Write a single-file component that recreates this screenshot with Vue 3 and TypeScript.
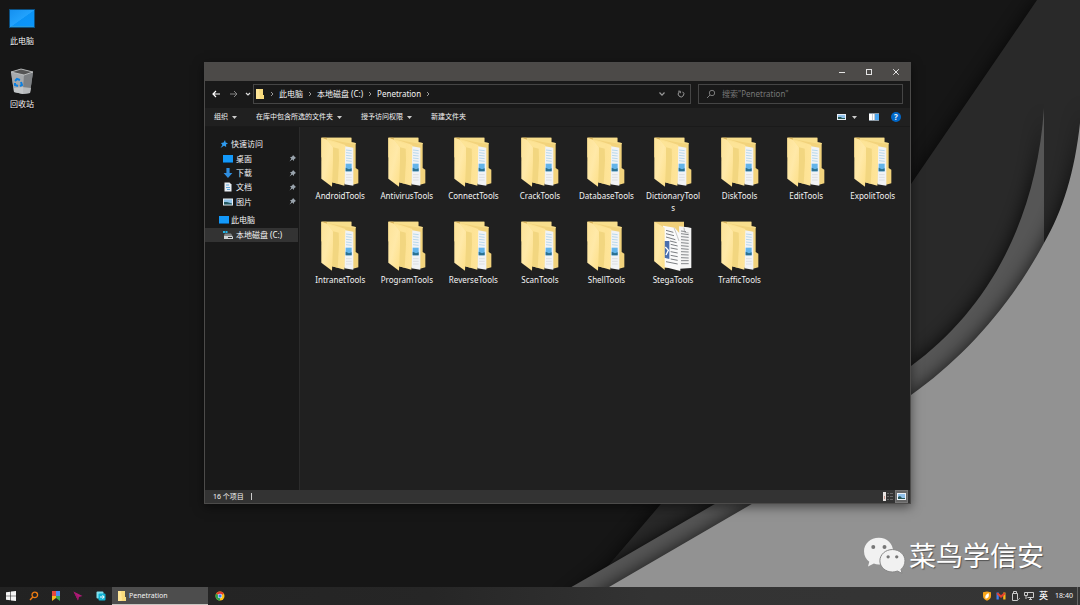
<script setup lang="ts">
import { ref } from 'vue'

interface PlaceItem {
  name: string
  icon: string
  root?: boolean
  pinned?: boolean
  selected?: boolean
}

const desktopIcons = [
  { name: '此电脑', icon: 'monitor' },
  { name: '回收站', icon: 'bin' },
]

const crumbs = ['此电脑', '本地磁盘 (C:)', 'Penetration']

const commands = [
  { name: '组织', menu: true },
  { name: '在库中包含所选的文件夹', menu: true },
  { name: '授予访问权限', menu: true },
  { name: '新建文件夹', menu: false },
]

const placeGroups: PlaceItem[][] = [
  [
    { name: '快速访问', icon: 'star', root: true },
    { name: '桌面', icon: 'screen', pinned: true },
    { name: '下载', icon: 'download', pinned: true },
    { name: '文档', icon: 'document', pinned: true },
    { name: '图片', icon: 'picture', pinned: true },
  ],
  [
    { name: '此电脑', icon: 'screen', root: true },
    { name: '本地磁盘 (C:)', icon: 'drive', selected: true },
  ],
]

const folders = [
  'AndroidTools', 'AntivirusTools', 'ConnectTools', 'CrackTools', 'DatabaseTools',
  'DictionaryTools', 'DiskTools', 'EditTools', 'ExpolitTools', 'IntranetTools',
  'ProgramTools', 'ReverseTools', 'ScanTools', 'ShellTools', 'StegaTools', 'TrafficTools',
]

const query = ref('')
</script>

<template>
  <main class="desktop">
    <svg class="wallpaper" viewBox="0 0 1080 605" preserveAspectRatio="none" aria-hidden="true">
      <defs>
        <filter id="soft" x="-20%" y="-20%" width="140%" height="140%">
          <feGaussianBlur stdDeviation="9" />
        </filter>
        <linearGradient id="leaf" x1="0" y1="0" x2="1" y2="1">
          <stop offset="0" stop-color="#fde398" />
          <stop offset="0.5" stop-color="#ffe9a8" />
          <stop offset="1" stop-color="#fddf88" />
        </linearGradient>
        <linearGradient id="panel" x1="0" y1="0" x2="1" y2="0">
          <stop offset="0" stop-color="#f9de8c" />
          <stop offset="1" stop-color="#ffe59a" />
        </linearGradient>
        <linearGradient id="glass" x1="0" y1="0" x2="1" y2="1">
          <stop offset="0" stop-color="#1590f0" />
          <stop offset="0.5" stop-color="#22a2fc" />
          <stop offset="0.52" stop-color="#0c93f5" />
          <stop offset="1" stop-color="#0a96fb" />
        </linearGradient>
        <path id="layer-dark" d="M1037 0L911 184Q770 385 660 505L608 566L560 605H1080V0Z" />
        <path id="layer-mid" d="M1044 108C1036 225 985 312 911 366C850 410 780 470 713 505L608 566L540 605H1044Z" />
        <path id="layer-light" d="M1082 100C1078 160 1066 205 1044 243C1012 303 965 357 911 395C860 430 810 472 750 505L609 587L580 605H1082Z" />
        <clipPath id="clip-dark"><use href="#layer-dark" /></clipPath>
      </defs>
      <rect width="1080" height="605" fill="#161616" />
      <use href="#layer-dark" fill="#000" opacity="0.7" filter="url(#soft)" />
      <use href="#layer-dark" fill="#292929" />
      <g clip-path="url(#clip-dark)">
        <use href="#layer-mid" fill="#000" opacity="0.85" filter="url(#soft)" />
        <rect x="1044" width="36" height="605" fill="#292929" />
      </g>
      <use href="#layer-mid" fill="#565656" />
      <use href="#layer-light" fill="#000" opacity="0.75" filter="url(#soft)" />
      <use href="#layer-light" fill="#929292" />
    </svg>

    <ul class="shortcuts">
      <li v-for="item in desktopIcons" :key="item.name">
        <button type="button" class="shortcut">
          <svg v-if="item.icon === 'monitor'" viewBox="0 0 26 26" width="26" height="26" aria-hidden="true">
            <rect x="0" y="4" width="26" height="19" fill="#0b4f80" />
            <rect x="1" y="5" width="24" height="17" fill="url(#glass)" />
            <rect x="2" y="21" width="22" height="1" fill="#2a9ad8" />
          </svg>
          <svg v-else viewBox="0 0 26 26" width="26" height="26" aria-hidden="true">
            <path d="M2 4L12 1L24 4L21 25L14 26L5 24Z" fill="#8e9194" />
            <path d="M2 4L15 7L14 26L5 24Z" fill="#a6a9ac" />
            <path d="M15 7L24 4L21 25L14 26Z" fill="#7d8083" />
            <path d="M2 4L12 1L24 4L15 7Z" fill="#555" stroke="#c9cbcc" stroke-width="0.8" />
            <path d="M5 20L13 19L22 20L21 25L14 26L5 24Z" fill="#cfd1d3" opacity="0.7" />
            <g fill="none" stroke="#0b7fe0" stroke-width="2">
              <path d="M6 13L8 11L11 12" /><path d="M12 14L13 17L11 18" /><path d="M9 18L6 17L6 15" />
            </g>
          </svg>
          <span>{{ item.name }}</span>
        </button>
      </li>
    </ul>

    <section class="window" aria-label="Penetration">
      <header class="titlebar">
        <button type="button" aria-label="最小化">
          <svg viewBox="0 0 8 8" width="8" height="8"><path d="M1 4.5H7" stroke="#e4e4e4" /></svg>
        </button>
        <button type="button" aria-label="最大化">
          <svg viewBox="0 0 8 8" width="8" height="8"><rect x="1.5" y="1.5" width="5" height="5" fill="none" stroke="#e4e4e4" /></svg>
        </button>
        <button type="button" aria-label="关闭">
          <svg viewBox="0 0 8 8" width="8" height="8"><path d="M1.2 1.2L6.8 6.8M6.8 1.2L1.2 6.8" stroke="#e4e4e4" /></svg>
        </button>
      </header>

      <div class="navbar">
        <div class="history">
          <button type="button" aria-label="后退">
            <svg viewBox="0 0 8 8" width="8" height="8"><path d="M8 4H1M4 1L1 4L4 7" fill="none" stroke="#fff" stroke-width="1.2" /></svg>
          </button>
          <button type="button" aria-label="前进">
            <svg viewBox="0 0 8 8" width="8" height="8"><path d="M0 4H7M4 1L7 4L4 7" fill="none" stroke="#858585" /></svg>
          </button>
          <button type="button" class="recent" aria-label="最近位置">
            <svg viewBox="0 0 6 4" width="6" height="4"><path d="M1 1L3 3L5 1" fill="none" stroke="#ddd" stroke-width="1.2" /></svg>
          </button>
        </div>
        <nav class="address" aria-label="地址">
          <svg viewBox="0 0 9 10" width="9" height="10" aria-hidden="true">
            <path d="M0 0H7V6H8V10H0Z" fill="#f7da7d" /><path d="M0 0H3L4 9L3 10H0Z" fill="#ffe698" />
          </svg>
          <svg class="chevron" viewBox="0 0 4 6" width="4" height="6" aria-hidden="true"><path d="M1 1L3 3L1 5" fill="none" stroke="#999" /></svg>
          <template v-for="crumb in crumbs" :key="crumb">
            <a href="#">{{ crumb }}</a>
            <svg class="chevron" viewBox="0 0 4 6" width="4" height="6" aria-hidden="true"><path d="M1 1L3 3L1 5" fill="none" stroke="#999" /></svg>
          </template>
          <button type="button" class="expand" aria-label="展开">
            <svg viewBox="0 0 8 6" width="8" height="6"><path d="M1.5 1.5L4 4.2L6.5 1.5" fill="none" stroke="#999" stroke-width="1.2" /></svg>
          </button>
          <button type="button" class="refresh" aria-label="刷新">
            <svg viewBox="0 0 8 8" width="8" height="8"><path d="M5.6 1.8A2.8 2.8 0 1 1 2.2 2M1.2 1.2H3.3V3.2" fill="none" stroke="#999" /></svg>
          </button>
        </nav>
        <label class="search">
          <svg viewBox="0 0 10 10" width="10" height="10" aria-hidden="true"><circle cx="6" cy="4" r="2.7" fill="none" stroke="#7a7a7a" /><path d="M4 6L1 9" stroke="#7a7a7a" /></svg>
          <input v-model="query" type="text" aria-label="搜索" placeholder="搜索&quot;Penetration&quot;" />
        </label>
      </div>

      <div class="commands">
        <button v-for="command in commands" :key="command.name" type="button">
          {{ command.name }}
          <svg v-if="command.menu" viewBox="0 0 5 3" width="5" height="3" aria-hidden="true"><path d="M0 0H5L2.5 3Z" fill="#ccc" /></svg>
        </button>
        <div class="view-tools">
          <button type="button" aria-label="更改视图">
            <svg viewBox="0 0 9 8" width="9" height="8"><path d="M0 1H9V7H0Z" fill="#e8eef4" /><path d="M1 2H8V6H1Z" fill="#8fc0ea" /><path d="M1 6V4L4 4L5 5H8V6Z" fill="#285b58" /></svg>
          </button>
          <button type="button" aria-label="更多选项">
            <svg viewBox="0 0 5 3" width="5" height="3"><path d="M0 0H5L2.5 3Z" fill="#ccc" /></svg>
          </button>
          <button type="button" class="preview" aria-label="预览窗格">
            <svg viewBox="0 0 10 8" width="10" height="8"><path d="M0 0H10V8H0Z" fill="#8d9aa5" /><path d="M0 1H3V7H0Z" fill="#fff" /><path d="M3.5 1H5.5V7H3.5Z" fill="#fff" /><path d="M6 1H10V7H6Z" fill="#4aa5ee" /></svg>
          </button>
          <button type="button" class="help" aria-label="帮助">?</button>
        </div>
      </div>

      <div class="body">
        <nav class="places" aria-label="导航窗格">
          <ul v-for="(group, index) in placeGroups" :key="index" :class="['place-group', { short: index === 1 }]">
            <li v-for="place in group" :key="place.name" :class="{ selected: place.selected }">
              <a href="#" :class="{ root: place.root }">
                <svg viewBox="0 0 10 10" width="10" height="10" aria-hidden="true">
                  <path v-if="place.icon === 'star'" d="M6 1L6.6 3.6L9 4.2L7 5.6L7.2 8L5 6.8L1.5 9L3.4 6L2 4L4.6 3.6Z" fill="#2f9cf0" />
                  <g v-else-if="place.icon === 'screen'"><rect y="1" width="10" height="8" fill="#0b5c9c" /><rect y="1" width="10" height="7" fill="#1399fa" /></g>
                  <path v-else-if="place.icon === 'download'" d="M3.4 0H6.6V5H9.4L5 10L0.6 5H3.4Z" fill="#2f8ee0" />
                  <g v-else-if="place.icon === 'document'"><path d="M1.5 0.5H6.5L8.5 2.5V9.5H1.5Z" fill="#e9eef3" /><path d="M3 3H6M3 5.5H7M4 7.5H7" stroke="#5fa8dd" /></g>
                  <g v-else-if="place.icon === 'picture'"><rect y="1.5" width="10" height="7" fill="#e8eef2" /><rect x="1" y="2.5" width="8" height="5" fill="#8fc3ea" /><path d="M1 7.5V5L4 5L9 6.5V7.5Z" fill="#24585f" /></g>
                  <g v-else><path d="M1 5.5H9L10 7V9H1Z" fill="#d0d3d5" /><path d="M5 7.5H9" stroke="#333" /><path d="M0 1H2V3H0ZM2.5 1H4.5V3H2.5Z" fill="#23b6e8" /><path d="M1 5L2 3.5H8L9 5Z" fill="#7e8385" /></g>
                </svg>
                <span>{{ place.name }}</span>
                <svg v-if="place.pinned" class="pin" viewBox="0 0 7 7" width="7" height="7" aria-hidden="true">
                  <path d="M4 0L7 3L6 3.4L5 4.6V6L3.3 4.6L0.5 6.5L2.3 3.7L1 2H2.4L3.6 1Z" fill="#9aa4ad" />
                </svg>
              </a>
            </li>
          </ul>
        </nav>

        <ul class="files">
          <li v-for="folder in folders" :key="folder">
            <button type="button" class="file">
              <svg viewBox="0 0 114 150" width="38" height="50" aria-hidden="true">
                <template v-if="folder === 'StegaTools'">
                  <path d="M1 2H90V20H104V140H30L1 120Z" fill="#f0d07a" />
                  <path d="M75 16L101 19L112 21V141L78 143Z" fill="#f4f4f4" />
                  <path d="M81 30L96 32M81 38L104 41M81 47L104 49M81 56L104 58M81 65L104 67M81 74L104 76M81 83L104 85M81 92L104 93M81 101L104 102M81 110L104 111M81 119L104 119M81 128L104 128" stroke="#85888b" stroke-width="3" />
                  <path d="M90 20L92 34L104 36" fill="none" stroke="#999" stroke-width="2" />
                  <path d="M27 14L62 20L79 40V150L29 137Z" fill="#fafafa" />
                  <path d="M60 20L70 46L75 60" fill="none" stroke="#aaa" stroke-width="2" />
                  <path d="M36 28L58 34M36 38L60 44M36 48L64 56M48 60L68 65M50 70L71 75M50 81L71 85M50 92L71 96M50 103L71 107M50 114L71 118M36 122L71 129" stroke="#7b7e82" stroke-width="3" />
                  <path d="M31 60H46V114L31 110Z" fill="#4a6fae" />
                  <path d="M34 78L43 88L36 102" fill="none" stroke="#fff" stroke-width="4" />
                  <path d="M1 2L32 20V147L1 121Z" fill="url(#leaf)" />
                </template>
                <template v-else>
                  <path d="M1 2H91V16L104 18V93L112 98V139L96 143L70 139L1 60Z" fill="#f2d37c" />
                  <path d="M1 2H91V16L104 18V22L60 14Z" fill="#f8de8c" />
                  <path d="M1 2H16L20 10L12 7Z" fill="#d9b35a" />
                  <path d="M72 28L97 32V146L70 142Z" fill="#f1f3f5" />
                  <path d="M75 39L92 41M75 47L92 49M75 55L92 57M75 63L92 65M75 71L92 73" stroke="#b8d8ec" stroke-width="3" />
                  <path d="M74 80H92V103H74Z" fill="#63b4ea" />
                  <path d="M74 92L84 97L92 94V103H74Z" fill="#2b7090" />
                  <path d="M75 113H92M75 121H92M75 129H92" stroke="#dcdfe2" stroke-width="3" />
                  <path d="M18 5L73 24L70 146L33 136Z" fill="url(#panel)" />
                  <path d="M34 24L53 31L54 70L50 140L33 136Z" fill="#f2d680" />
                  <path d="M1 2L18 8L36 31V72L33 149L1 125Z" fill="url(#leaf)" />
                  <path d="M18 8L36 31L54 35V22Z" fill="#fde497" />
                </template>
              </svg>
              <span>{{ folder }}</span>
            </button>
          </li>
        </ul>
      </div>

      <footer class="statusbar">
        <span class="count">16 个项目</span>
        <div class="modes">
          <button type="button" aria-label="详细信息">
            <svg viewBox="0 0 10 9" width="10" height="9"><path d="M0 0H3V9H0Z" fill="#e8e4e2" /><path d="M1 4H2V7H1Z" fill="#c79285" /><path d="M4 1.5H6M7 1.5H10M4 4.5H6M7 4.5H10M4 7.5H6M7 7.5H10" stroke="#666" /></svg>
          </button>
          <button type="button" class="active" aria-label="大图标">
            <svg viewBox="0 0 9 7" width="9" height="7"><path d="M0 0H9V7H0Z" fill="#edf2f7" /><path d="M1 1H8V5H1Z" fill="#8fc0ea" /><path d="M1 6V4L3 3L5 5H8V6Z" fill="#28575a" /></svg>
          </button>
        </div>
      </footer>
    </section>

    <div class="watermark">
      <svg viewBox="36 168 130 112" width="43" height="37" aria-hidden="true">
        <path d="M84 170C58 170 39 188 39 211C39 224 45 236 55 243L51 257L69 248C75 251 80 252 88 251C111 249 127 232 127 211C127 188 109 170 84 170Z" fill="#f1f1f1" />
        <path d="M125 206C104 206 87 221 87 240C87 259 104 274 125 274C130 274 135 273 140 271L154 278L151 266C158 260 163 251 163 240C163 221 146 206 125 206Z" fill="#f1f1f1" stroke="#858585" stroke-width="3" />
        <circle cx="67" cy="198" r="6" fill="#777" /><circle cx="101" cy="198" r="6" fill="#777" />
        <circle cx="112" cy="228" r="5" fill="#777" /><circle cx="138" cy="228" r="5" fill="#777" />
      </svg>
      <span>菜鸟学信安</span>
    </div>

    <footer class="taskbar">
      <div class="pinned">
        <button type="button" aria-label="开始">
          <svg viewBox="0 0 10 10" width="10" height="10"><path d="M0 1.3L4.4 0.7V4.7H0ZM5 0.6L10 0V4.7H5ZM0 5.3H4.4V9.3L0 8.7ZM5 5.3H10V10L5 9.4Z" fill="#f5f5f5" /></svg>
        </button>
        <button type="button" aria-label="搜索">
          <svg viewBox="0 0 10 10" width="10" height="10"><circle cx="5.8" cy="3.9" r="2.8" fill="none" stroke="#f07d13" stroke-width="1.3" /><path d="M3.8 6L1 9" stroke="#f07d13" stroke-width="1.4" /></svg>
        </button>
        <button type="button" aria-label="收藏">
          <svg viewBox="0 0 10 10" width="10" height="10"><path d="M1 0H5V5H1Z" fill="#e5483d" /><path d="M5 0H9V5H5Z" fill="#4a8cf0" /><path d="M1 5H5V7L1 10Z" fill="#f4b91d" /><path d="M5 5H9V10L5 7Z" fill="#3aa757" /></svg>
        </button>
        <button type="button" aria-label="指针">
          <svg viewBox="0 0 10 10" width="10" height="10"><path d="M0.5 0.5L9.5 5L5.8 6L5 9.5Z" fill="#b11b78" /><path d="M0.5 0.5L5.8 6L5 9.5Z" fill="#a0186c" /></svg>
        </button>
        <button type="button" aria-label="同步">
          <svg viewBox="0 0 10 10" width="10" height="10"><rect x="0.5" y="0.5" width="7" height="7" rx="1" fill="#7fe0ee" /><rect x="2.5" y="2.5" width="7" height="7" rx="1" fill="#10b3d4" /><path d="M4 6H8M6.5 4.2L8.2 6L6.5 7.8" fill="none" stroke="#fff" /></svg>
        </button>
      </div>
      <button type="button" class="task">
        <svg viewBox="0 0 9 10" width="9" height="10" aria-hidden="true"><path d="M0 0H7V6H8V10H0Z" fill="#f7da7d" /><path d="M0 0H3L4 9L3 10H0Z" fill="#ffe698" /></svg>
        <span>Penetration</span>
      </button>
      <button type="button" class="chrome" aria-label="Chrome">
        <svg viewBox="0 0 10 10" width="10" height="10"><circle cx="5" cy="5" r="4.5" fill="#fbc116" /><path d="M5 5L1.1 2.8A4.5 4.5 0 0 1 8.9 2.8Z" fill="#e33b2e" /><path d="M5 5L1.1 2.8A4.5 4.5 0 0 0 5 9.5Z" fill="#2ca14c" /><circle cx="5" cy="5" r="2.2" fill="#fff" /><circle cx="5" cy="5" r="1.7" fill="#3b7ded" /></svg>
      </button>
      <div class="tray">
        <svg viewBox="0 0 10 10" width="10" height="10" role="img" aria-label="安全"><path d="M5 0.5L9 1.3V5C9 7.5 7 9 5 9.8C3 9 1 7.5 1 5V1.3Z" fill="#f8a51b" /><path d="M6.5 2C3.5 3.5 3 5 3.4 7.5C6.5 7.5 7.5 5 6.5 2Z" fill="#fff" /></svg>
        <svg viewBox="0 0 10 10" width="10" height="10" role="img" aria-label="邮件"><path d="M0.5 1.5V8.5H2.8V1.5Z" fill="#3f7fee" /><path d="M7.2 1.5V8.5H9.5V1.5Z" fill="#f9b818" /><path d="M1.2 2.2L5 5.6L8.8 2.2" fill="none" stroke="#e3402f" stroke-width="2" /></svg>
        <svg viewBox="0 0 10 10" width="10" height="10" role="img" aria-label="USB"><path d="M3.5 0.5H6.5V2.5H3.5ZM2.5 2.5H7.5V9.5H2.5Z" fill="none" stroke="#ccc" /><path d="M7 8L8 9L10 7" fill="none" stroke="#999" /></svg>
        <svg viewBox="0 0 10 10" width="10" height="10" role="img" aria-label="网络"><path d="M2.5 1.5H9.5V6.5H3.5M5 8.5H8M6.5 6.5V8.5" fill="none" stroke="#ccc" /><path d="M0.5 1.5H3.5V4.5H0.5ZM2 4.5V8" fill="none" stroke="#ccc" /></svg>
        <span class="ime">英</span>
        <time>18:40</time>
      </div>
    </footer>
  </main>
</template>

<style>
body {
  margin: 0;
  background: #161616;
}
</style>

<style scoped>
.desktop {
  position: relative;
  display: flex;
  flex-direction: column;
  justify-content: space-between;
  height: 100vh;
  overflow: hidden;
  color: #f4f4f4;
  font: 8px/12px "Noto Sans", "Noto Sans CJK SC", sans-serif;
}

.wallpaper {
  position: absolute;
  inset: 0;
  width: 100%;
  height: 100%;
}

ul {
  margin: 0;
  padding: 0;
  list-style: none;
}

button {
  display: flex;
  align-items: center;
  justify-content: center;
  margin: 0;
  padding: 0;
  border: 0;
  background: none;
  color: inherit;
  font: inherit;
}

a {
  color: inherit;
  text-decoration: none;
}

svg {
  flex: none;
}

.shortcuts {
  position: relative;
  width: 44px;
  padding-top: 5px;
}

.shortcut {
  flex-direction: column;
  justify-content: flex-start;
  gap: 4px;
  width: 100%;
  height: 63px;
  text-shadow: 0 1px 1px #000;
}

.window {
  position: absolute;
  top: 62px;
  right: 169px;
  bottom: 101px;
  left: 204px;
  box-sizing: border-box;
  display: flex;
  flex-direction: column;
  border: 1px solid #4c4b4a;
  background: #202020;
  box-shadow: 0 3px 10px rgba(0, 0, 0, 0.5);
}

.titlebar {
  display: flex;
  justify-content: flex-end;
  height: 18px;
  padding-right: 1px;
  background: #4c4a48;
}

.titlebar button {
  width: 27px;
}

.navbar {
  box-sizing: border-box;
  display: flex;
  align-items: center;
  height: 27px;
  padding: 0 7px 1px 2px;
  background: #191919;
}

.history {
  display: flex;
}

.history button {
  width: 18px;
  height: 20px;
}

.history .recent {
  width: 10px;
}

.address,
.search {
  box-sizing: border-box;
  display: flex;
  align-items: center;
  height: 20px;
  border: 1px solid #454545;
}

.address {
  flex: 1;
  padding-left: 2px;
}

.chevron {
  margin: 0 5px;
}

.expand {
  width: 18px;
  height: 18px;
  margin-left: auto;
}

.refresh {
  width: 19px;
  height: 18px;
}

.search {
  gap: 6px;
  width: 205px;
  margin-left: 7px;
  padding-left: 7px;
}

.search input {
  flex: 1;
  min-width: 0;
  padding: 0;
  border: 0;
  outline: 0;
  background: none;
  color: #ddd;
  font: inherit;
}

.search input::placeholder {
  color: #777;
  opacity: 1;
}

.commands {
  display: flex;
  align-items: center;
  gap: 19px;
  height: 18px;
  padding: 0 9px;
  border-bottom: 1px solid #1a1a1a;
  font-size: 7px;
}

.commands button {
  gap: 4px;
}

.view-tools {
  display: flex;
  align-items: center;
  gap: 6px;
  margin-left: auto;
}

.view-tools .preview {
  margin: 0 6px;
}

.view-tools .help {
  width: 10px;
  height: 10px;
  border-radius: 50%;
  background: #0067c8;
  font-size: 8px;
  font-weight: 700;
  line-height: 10px;
}

.body {
  display: flex;
  flex: 1;
  min-height: 0;
}

.places {
  display: flex;
  flex-direction: column;
  gap: 4px;
  box-sizing: border-box;
  width: 95px;
  padding: 10px 1px 0 0;
  border-right: 1px solid #2b2b2b;
  background: #191919;
}

.place-group {
  display: flex;
  flex-direction: column;
  height: 72px;
}

.place-group.short {
  height: 29px;
}

.place-group li {
  display: flex;
  flex: 1;
}

.place-group .selected {
  background: #333;
}

.place-group a {
  display: flex;
  flex: 1;
  align-items: center;
  gap: 3px;
  padding-left: 18px;
}

.place-group .root {
  gap: 2px;
  padding-left: 14px;
}

.pin {
  margin-right: 2px;
  margin-left: auto;
}

.files {
  display: grid;
  flex: 1;
  grid-template-columns: repeat(9, 1fr);
  grid-auto-rows: 84px;
  align-content: start;
  padding: 10px 4px 0 7px;
}

.file {
  flex-direction: column;
  gap: 3px;
  width: 56px;
  margin: 0 auto;
}

.file span {
  width: 100%;
  text-align: center;
  word-break: break-all;
}

.statusbar {
  display: flex;
  align-items: center;
  height: 13px;
  padding: 0 2px 0 8px;
  background: #333;
  font-size: 7px;
}

.count {
  padding-right: 7px;
  border-right: 1px solid #ccc;
  line-height: 7px;
}

.modes {
  display: flex;
  gap: 1px;
  margin-left: auto;
}

.modes button {
  box-sizing: border-box;
  width: 13px;
  height: 13px;
}

.modes .active {
  border: 1px solid #777;
  background: #666;
}

.watermark {
  position: absolute;
  right: 36px;
  bottom: 31px;
  display: flex;
  align-items: center;
  gap: 3px;
  color: #fff;
  font-size: 27px;
  line-height: 37px;
  text-shadow: 1px 1px 1px #555;
}

.taskbar {
  position: relative;
  display: flex;
  height: 18px;
  background: linear-gradient(90deg, #222 0%, #262626 40%, #333 60%, #353535 100%);
}

.pinned {
  display: flex;
  width: 112px;
}

.pinned button {
  flex: 1;
}

.task {
  box-sizing: border-box;
  justify-content: flex-start;
  gap: 2px;
  width: 96px;
  padding-left: 6px;
  border-bottom: 1px solid #c8c4c0;
  background: #4d4d4d;
  font-size: 7px;
}

.chrome {
  width: 23px;
}

.tray {
  display: flex;
  align-items: center;
  gap: 4px;
  margin: 0 2px 0 auto;
  padding-right: 4px;
  border-right: 1px solid #666;
  font-size: 7px;
}

.ime {
  margin: 0 3px 0 1px;
  font-size: 9px;
  font-weight: 500;
}
</style>
